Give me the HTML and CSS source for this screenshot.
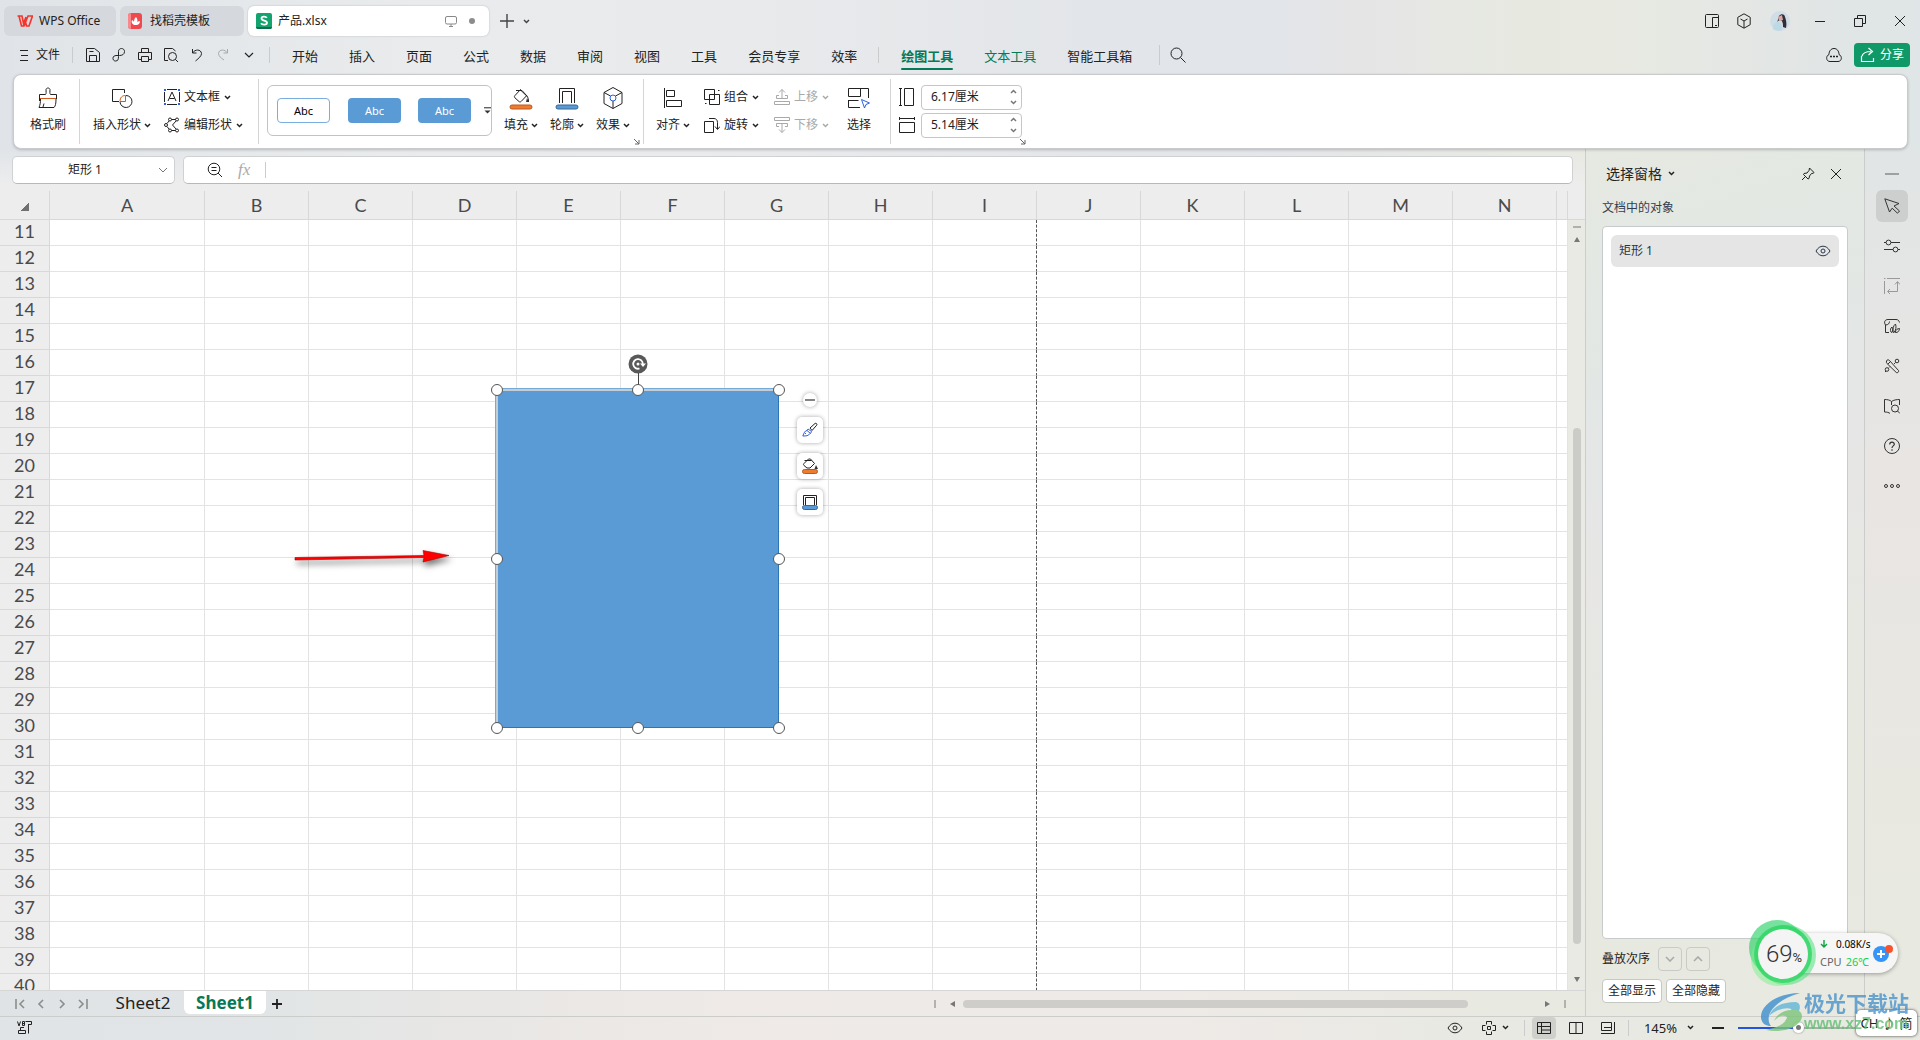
FILE: index.html
```html
<!DOCTYPE html>
<html lang="zh-CN">
<head>
<meta charset="utf-8">
<title>产品.xlsx - WPS Office</title>
<link rel="stylesheet" href="styles.css">
</head>
<body>
<svg class="defs" width="0" height="0" aria-hidden="true">
  <symbol id="chev" viewBox="0 0 7 5"><path d="M1 1l2.500 2.500L6 1" stroke-width="1.500"/></symbol>
  <symbol id="launch" viewBox="0 0 7 7"><path d="M1 1l5 5M6 2v4H2"/></symbol>
  <symbol id="eye" viewBox="0 0 16 16"><path d="M1 8c2-3.300 4.300-4.800 7-4.800S13 4.700 15 8c-2 3.300-4.300 4.800-7 4.800S3 11.300 1 8z"/><circle cx="8" cy="8" r="2"/></symbol>
  <symbol id="bucket" viewBox="0 0 24 24"><path d="M11.500 3.500L6 9.500c-.8.900-.8 1.600 0 2.400l4 3.600c.8.700 1.500.6 2.300-.2l5.200-5.500-6.500-6.300M7 4.500h6l5 5.500c1 1.500 1.500 3 1.500 6"/><path class="ink" d="M18 12l2 4h-3z"/><rect class="orange" x="1" y="19" width="22" height="4" rx="2"/></symbol>
  <symbol id="outline" viewBox="0 0 24 24"><path d="M4.500 17V2.500h15V17M7.500 17V5.500h9V17"/><rect class="blue" x="1" y="19" width="22" height="4" rx="2"/></symbol>
</svg>

<header class="titlebar">
  <nav class="tabs" aria-label="文档标签">
    <button class="tab tab-home">
      <svg class="i" width="16" height="16" viewBox="0 0 16 16"><path class="wps" d="M.5 3H5l1.500 7.500L9 4M2 3l2.500 10h2.500L11 3h4.500L12 13H9.500L8.500 9"/></svg>
      WPS Office
    </button>
    <button class="tab tab-docer">
      <svg width="16" height="16" viewBox="0 0 16 16"><rect width="14" height="16" rx="3" fill="#f0484f"/><path d="M0 3a3 3 0 013-3v16a3 3 0 01-3-3z" fill="#f9888c"/><path d="M6 12c-2-1-3-3-2-5 1 .5 1.500 1 2 2 0-2 .5-4 2-5 2 2 2 6 0 8z" fill="#fff"/><path d="M8 11c1-2 2-3 4-3 0 2-1 4-4 4z" fill="#fff"/></svg>
      找稻壳模板
    </button>
    <button class="tab tab-active">
      <svg width="16" height="16" viewBox="0 0 16 16"><rect width="16" height="16" rx="2" fill="#12a36f"/><path d="M0 14h16a2 2 0 01-2 2H2a2 2 0 01-2-2z" fill="#0a6e4b"/><path d="M10.800 4.800C10 3.300 5.500 3 5.500 5.500S11 7.200 11 9.700 6 12 5 10.300" fill="none" stroke="#fff" stroke-width="1.800"/></svg>
      产品.xlsx
      <svg class="i monitor" width="12" height="12" viewBox="0 0 12 12"><rect x=".5" y="1.500" width="11" height="7.500" rx="1.500"/><path d="M4 11.500h4M6 9v2"/></svg>
      <span class="dot"></span>
    </button>
  </nav>
  <button class="plain" aria-label="新建"><svg class="i" width="14" height="14" viewBox="0 0 14 14"><path d="M7 0v14M0 7h14" stroke-width="1.400"/></svg></button>
  <button class="plain" aria-label="标签列表"><svg class="i" width="7" height="5"><use href="#chev"/></svg></button>
  <div class="window-controls">
    <button aria-label="侧边视图"><svg class="i" width="16" height="16" viewBox="0 0 16 16"><rect x="1.500" y="1.500" width="13" height="13" rx="1"/><path d="M14 4.500H8.500v10M11 12.500h2"/></svg></button>
    <button aria-label="应用"><svg class="i" width="16" height="16" viewBox="0 0 16 16"><path d="M8 .8l6.200 3.500v7.400L8 15.200l-6.200-3.500V4.300zM4.500 6L8 8l3.500-2M8 8v7"/></svg></button>
    <button class="wide" aria-label="账号"><svg width="20" height="20" viewBox="0 0 20 20"><circle cx="10" cy="10" r="10" fill="#cfdde6"/><path d="M9 5c2-3 6-2 6 1 1 3 2 6 1 11l-3-1c0-3 0-5-2-7l-3 1-1 2z" fill="#332d37"/><path d="M8 6l4-2 1 5-4 1z" fill="#d8a8a4"/><path d="M3 18c0-5 2-7 5-7s4 3 4 8c-4 1-7 1-9-1z" fill="#bcd9e6"/></svg></button>
    <button class="wide" aria-label="最小化"><svg class="i" width="10" height="10" viewBox="0 0 10 10"><path d="M0 5.500h10"/></svg></button>
    <button class="wide" aria-label="还原"><svg class="i" width="12" height="12" viewBox="0 0 12 12"><path d="M.5 3.500h8v8h-8zM3.500 3V.5h8v8H9"/></svg></button>
    <button class="wide" aria-label="关闭"><svg class="i" width="10" height="10" viewBox="0 0 10 10"><path d="M0 0l10 10M10 0L0 10"/></svg></button>
  </div>
</header>

<nav class="menubar" aria-label="菜单">
  <button class="file"><svg class="i" width="8" height="12" viewBox="0 0 8 12"><path d="M0 1.500h8M1 6.500h7M0 11.500h8"/></svg>文件</button>
  <span class="sep"></span>
  <div class="quick">
    <button aria-label="保存"><svg class="i" width="16" height="16" viewBox="0 0 16 16"><path d="M1.500 14.500v-13h8l5 4v9zM4.500 14V8.500h7V14M4.500 4.500h4"/></svg></button>
    <button aria-label="输出"><svg class="i" width="16" height="16" viewBox="0 0 16 16"><path d="M7.500 9.500V4.500c0-4 6-4 6 0 0 3-2.500 4-5 4H5c-4 0-4 5.500-.5 5.500 2.500 0 3-1.500 3-4.500"/></svg></button>
    <button aria-label="打印"><svg class="i" width="16" height="16" viewBox="0 0 16 16"><path d="M4.500 5V1.500h7V5M4 12.500H1.500v-7h13v7H12M4.500 9.500h7v5h-7z"/></svg></button>
    <button aria-label="打印预览"><svg class="i" width="16" height="16" viewBox="0 0 16 16"><path d="M5 13.500H1.500v-12h8L12.500 4"/><circle cx="9.500" cy="9.500" r="4"/><path d="M12.500 12.500L15 15"/></svg></button>
    <button aria-label="撤销"><svg class="i" width="16" height="16" viewBox="0 0 16 16"><path d="M3.500 2v4h4M3.500 6C6 2 12 2 12.500 6.500 12.500 9 10 11 6.500 14"/></svg></button>
    <button aria-label="恢复" disabled><svg class="i" width="16" height="16" viewBox="0 0 16 16"><path d="M12.500 2v4h-4M12.500 6C10 2 4 2 3.500 6.500 3.500 9 6 11 9 13"/></svg></button>
    <button aria-label="更多"><svg class="i" width="10" height="6" viewBox="0 0 10 6"><path d="M1 1l4 4 4-4" stroke-width="1.200"/></svg></button>
  </div>
  <span class="sep"></span>
  <div class="menus">
    <button>开始</button><button>插入</button><button>页面</button><button>公式</button><button>数据</button><button>审阅</button><button>视图</button><button>工具</button><button>会员专享</button><button>效率</button>
  </div>
  <span class="sep mid"></span>
  <div class="menus">
    <button class="current">绘图工具</button><button class="green">文本工具</button><button>智能工具箱</button>
  </div>
  <span class="sep end"></span>
  <button class="search" aria-label="搜索"><svg class="i" width="16" height="16" viewBox="0 0 16 16"><circle cx="6.500" cy="6.500" r="5.500"/><path d="M10.500 10.500L15.500 15.500"/></svg></button>
  <div class="share-area">
    <button aria-label="云同步"><svg class="i" width="16" height="16" viewBox="0 0 16 16"><path d="M4 14.500C0 14.500-.5 9 3 7.500 3 4 5 1.500 8 1.500S13 4 13 7.500c3.500 1.500 3 7-1 7z"/><path d="M4 9.500h2M7 9.500h2M10 9.500h2" stroke-width="1.600"/></svg></button>
    <button class="share"><svg class="i" width="16" height="16" viewBox="0 0 16 16"><path d="M1.500 9v5.500h12V11M2 9c1-3 4-4.500 9-4.500M8.500 1l4 3.500-4 3.500" stroke-width="1.200"/></svg>分享</button>
  </div>
</nav>

<section class="ribbon" aria-label="绘图工具">
  <div class="group g-brush">
    <button class="big"><svg class="i" width="24" height="24" viewBox="0 0 24 24"><path d="M3.500 15V8.500h6c1-1 .5-3 .5-5 .5-2 3.500-2 4 0 0 2-.5 4 .5 5h6V13M4.500 13c0 4-.5 6-1.500 8.500h15c1.500-1.500 2-4 2-8.500M7 21l1-3.500"/><path class="s-orange" d="M4 12.500h16"/></svg><span>格式刷</span></button>
  </div>
  <div class="group g-insert">
    <button class="big"><svg class="i" width="24" height="24" viewBox="0 0 24 24"><path d="M9 15.500H2.500v-12h12V7"/><path d="M16 9.500a6 6 0 11-6 6.500"/><path class="s-orange" d="M10 15.500c0-4 2-6 5.500-6v6z"/></svg><span>插入形状<svg class="i" width="7" height="5"><use href="#chev"/></svg></span></button>
    <div class="rows">
      <button class="row"><svg class="i" width="16" height="16" viewBox="0 0 16 16"><path d="M.5 3v10M15.500 3v10M3 .5h10M3 15.500h10M4 12l4-9 4 9M5.500 9.500h5"/><path class="s-blue" d="M0 1h2M14 1h2M0 15h2M14 15h2" stroke-width="2"/></svg>文本框<svg class="i chev" width="7" height="5"><use href="#chev"/></svg></button>
      <button class="row"><svg class="i" width="16" height="16" viewBox="0 0 16 16"><circle cx="6" cy="2.500" r="1.500"/><circle cx="13" cy="2.500" r="1.500"/><circle cx="2" cy="8" r="1.500"/><circle cx="6" cy="13.500" r="1.500"/><circle cx="13" cy="13.500" r="1.500"/><path d="M7.500 2.500h4M5 4L3 6.500M3 9.500L5 12M7.500 13.500h4M12 4L8.500 8l3.500 4"/></svg>编辑形状<svg class="i chev" width="7" height="5"><use href="#chev"/></svg></button>
    </div>
  </div>
  <div class="group g-style">
    <div class="gallery">
      <button class="abc abc-line">Abc</button>
      <button class="abc">Abc</button>
      <button class="abc">Abc</button>
      <button class="more" aria-label="更多样式"><svg class="i" width="7" height="8" viewBox="0 0 7 8"><path d="M0 .8h7"/><path class="ink" d="M0.500 3.500h6L3.500 6.500z"/></svg></button>
    </div>
    <button class="big"><svg class="i" width="24" height="24"><use href="#bucket"/></svg><span>填充<svg class="i" width="7" height="5"><use href="#chev"/></svg></span></button>
    <button class="big"><svg class="i" width="24" height="24"><use href="#outline"/></svg><span>轮廓<svg class="i" width="7" height="5"><use href="#chev"/></svg></span></button>
    <button class="big"><svg class="i" width="24" height="24" viewBox="0 0 24 24"><path d="M12 1.500l9 5v11l-9 5-9-5v-11zM3 6.500l6.500 3.500M21 6.500L14.500 10M12 15v7.500"/><circle class="s-blue" cx="12" cy="12" r="3"/></svg><span>效果<svg class="i" width="7" height="5"><use href="#chev"/></svg></span></button>
    <button class="launcher" aria-label="形状格式"><svg class="i" width="7" height="7"><use href="#launch"/></svg></button>
  </div>
  <div class="group g-arrange">
    <button class="big"><svg class="i" width="24" height="24" viewBox="0 0 24 24"><path d="M3.500 2v20M5.500 4.500h8v6h-8zM5.500 14.500h15v6h-15z"/></svg><span>对齐<svg class="i" width="7" height="5"><use href="#chev"/></svg></span></button>
    <div class="rows">
      <button class="row"><svg class="i" width="16" height="16" viewBox="0 0 16 16"><path d="M.5 .5h10v10H.500zM5.500 5.500h10v10h-10zM14 1.500h1.500M1 14.500h1.500"/></svg>组合<svg class="i chev" width="7" height="5"><use href="#chev"/></svg></button>
      <button class="row"><svg class="i" width="16" height="16" viewBox="0 0 16 16"><path d="M.5 4.500h9v11h-9zM5 1.500h5c2 0 3.500 1.500 3.500 4V12M11 9.500l2.500 3L16 9.500"/></svg>旋转<svg class="i chev" width="7" height="5"><use href="#chev"/></svg></button>
    </div>
    <div class="rows order-rows">
      <button class="row" disabled><svg class="i" width="16" height="16" viewBox="0 0 16 16"><path d="M8 9V.5M5 3.500l3-3 3 3M5 6.500H2.500v3h11v-3H11M.5 12.500h15v3H.500z"/></svg>上移<svg class="i chev" width="7" height="5"><use href="#chev"/></svg></button>
      <button class="row" disabled><svg class="i" width="16" height="16" viewBox="0 0 16 16"><path d="M8 7v8.500M5 12.500l3 3 3-3M5 9.500H2.500v-3h11v3H11M.5 .5h15v3H.500z"/></svg>下移<svg class="i chev" width="7" height="5"><use href="#chev"/></svg></button>
    </div>
    <button class="big pick"><svg class="i" width="24" height="24" viewBox="0 0 24 24"><path d="M13.500 10.500h-12v-8h12M1.500 14v7.500H13M1.500 14.500h10M12.500 2.500h9V12M13.500 10.500v-8"/><path class="s-blue" d="M14.500 13.500l8 3.500-3.500 1.500-1.500 3.500z"/></svg><span>选择</span></button>
  </div>
  <div class="group g-size">
    <div class="rows">
      <div class="size"><label for="h"><svg class="i" width="16" height="20" viewBox="0 0 16 20"><path d="M1.500 2v16M0 1.500h3M0 18.500h3M5.500 1.500h9v17h-9z"/></svg></label><span class="spin"><input id="h" value="6.17厘米" aria-label="高度"><span class="arrows"><button aria-label="增加高度"><svg class="i flip" width="7" height="5"><use href="#chev"/></svg></button><button aria-label="减少高度"><svg class="i" width="7" height="5"><use href="#chev"/></svg></button></span></span></div>
      <div class="size"><label for="w"><svg class="i" width="16" height="16" viewBox="0 0 16 16"><path d="M1 1.500h14M.5 0v3M15.500 0v3M.5 5.500h15v10H.500z"/></svg></label><span class="spin"><input id="w" value="5.14厘米" aria-label="宽度"><span class="arrows"><button aria-label="增加宽度"><svg class="i flip" width="7" height="5"><use href="#chev"/></svg></button><button aria-label="减少宽度"><svg class="i" width="7" height="5"><use href="#chev"/></svg></button></span></span></div>
    </div>
    <button class="launcher" aria-label="大小和属性"><svg class="i" width="7" height="7"><use href="#launch"/></svg></button>
  </div>
</section>

<main class="work">
  <section class="editor">
    <div class="formula-row">
      <div class="namebox"><input value="矩形 1" aria-label="名称框"><button aria-label="名称列表"><svg class="i" width="10" height="6" viewBox="0 0 10 6"><path d="M1 1l4 4 4-4"/></svg></button></div>
      <div class="formula"><svg class="i" width="16" height="16" viewBox="0 0 16 16"><circle cx="7" cy="7" r="5.800"/><path d="M11 11l4 4M4.500 5.500h5M4.500 8.500h5"/></svg><span class="fx">fx</span><input aria-label="编辑栏"></div>
    </div>
    <div class="sheet">
      <div class="canvas">
        <table class="grid"><colgroup id="cols"></colgroup><thead><tr id="heads"></tr></thead><tbody id="rows"></tbody></table>
        <div class="shape">
          <span class="stem"></span>
          <svg class="rotate" width="20" height="20" viewBox="0 0 20 20"><circle cx="10" cy="10" r="9.500" fill="#595959"/><path d="M11.500 14.500A4.800 4.800 0 1114.800 10" fill="none" stroke="#fff" stroke-width="1.800"/><path d="M12 9.500h6l-3 3.500z" fill="#fff"/><circle cx="10" cy="10" r="1.500" fill="#fff"/></svg>
          <i class="h n w"></i><i class="h n c"></i><i class="h n e"></i><i class="h m w"></i><i class="h m e"></i><i class="h s w"></i><i class="h s c"></i><i class="h s e"></i>
        </div>
        <div class="float-tools">
          <button class="collapse" aria-label="收起"><svg class="i" width="10" height="2" viewBox="0 0 10 2"><path d="M0 1h10" stroke-width="1.600"/></svg></button>
          <button aria-label="形状样式"><svg class="i" width="16" height="16" viewBox="0 0 16 16"><path d="M8 6l5-4.500c1-.8 2.500.5 1.700 1.700L10 8.500z"/><path class="s-blue" d="M6 7l3.500 2.500-1 2L5 8.500zM5 8.500C3 8.500 2 11 .8 14c3 0 6 0 7-2.500M3 12l1-1"/></svg></button>
          <button aria-label="填充"><svg class="i" width="16" height="16" viewBox="0 0 16 16"><path d="M6.500 1L2 5.500c-.7.700-.7 1.400 0 2l3 2.500h3l4.500-4.500L8.500 1zM2.500 2.500h7"/><path class="ink" d="M14 7l2 4h-3.500z"/><rect class="orange" x=".5" y="11.500" width="15" height="4" rx="2"/></svg></button>
          <button aria-label="轮廓"><svg class="i" width="16" height="16" viewBox="0 0 16 16"><path d="M1.500 11V1.500h13V11M3.500 11V3.500h9V11"/><rect class="blue" x=".5" y="11.500" width="15" height="4" rx="2"/></svg></button>
        </div>
        <svg class="arrow" width="160" height="30" viewBox="0 0 160 30"><path d="M1 13.500l129-2-1-5 26 5-26 6.500 1-4.500L1 16z" fill="#fe0000" stroke="#a00" stroke-width=".6"/></svg>
      </div>
      <div class="vscroll"><span class="corner"></span><span class="grip"></span><svg width="6" height="5"><path d="M3 0l3 5H0z" fill="#777"/></svg><div class="vtrack"><span class="vthumb"></span></div><svg width="6" height="5"><path d="M0 0h6L3 5z" fill="#777"/></svg></div>
    </div>
    <div class="sheetbar">
      <div class="nav">
        <button aria-label="第一个"><svg class="i" width="10" height="10" viewBox="0 0 10 10"><path d="M1 0v10M9 1L5 5l4 4" stroke-width="1.600"/></svg></button>
        <button aria-label="上一个"><svg class="i" width="10" height="10" viewBox="0 0 10 10"><path d="M7 1L3 5l4 4" stroke-width="1.600"/></svg></button>
        <button aria-label="下一个"><svg class="i" width="10" height="10" viewBox="0 0 10 10"><path d="M3 1l4 4-4 4" stroke-width="1.600"/></svg></button>
        <button aria-label="最后一个"><svg class="i" width="10" height="10" viewBox="0 0 10 10"><path d="M9 0v10M1 1l4 4-4 4" stroke-width="1.600"/></svg></button>
      </div>
      <button class="sheet-tab">Sheet2</button><button class="sheet-tab on">Sheet1</button>
      <button class="add" aria-label="新建工作表"><svg class="i" width="10" height="10" viewBox="0 0 10 10"><path d="M5 0v10M0 5h10" stroke-width="1.800"/></svg></button>
      <div class="hscroll"><span class="vgrip"></span><svg width="5" height="6"><path d="M5 0v6L0 3z" fill="#777"/></svg><div class="htrack"><span class="hthumb"></span></div><svg width="5" height="6"><path d="M0 0v6l5-3z" fill="#777"/></svg><span class="vgrip"></span></div>
    </div>
  </section>

  <aside class="pane" aria-label="选择窗格">
    <div class="pane-head"><h2>选择窗格</h2><svg class="i" width="7" height="5"><use href="#chev"/></svg>
      <button class="pin" aria-label="固定"><svg class="i" width="14" height="14" viewBox="0 0 14 14"><path d="M8.500 1l4.500 4.500-1 .8-1.500.2-2 2.500-.5 2.500-1 .5L2.500 7.500l.5-1L6 6l2-2.500zM4.500 9.500L1 13"/></svg></button>
      <button aria-label="关闭窗格"><svg class="i" width="10" height="10" viewBox="0 0 10 10"><path d="M0 0l10 10M10 0L0 10"/></svg></button></div>
    <p class="caption">文档中的对象</p>
    <ul class="objects"><li>矩形 1<button aria-label="显示或隐藏"><svg class="i" width="16" height="16"><use href="#eye"/></svg></button></li></ul>
    <div class="order"><span>叠放次序</span><button aria-label="下移"><svg class="i" width="10" height="6" viewBox="0 0 10 6"><path d="M1 1l4 4 4-4" stroke-width="1.600"/></svg></button><button aria-label="上移"><svg class="i flip" width="10" height="6" viewBox="0 0 10 6"><path d="M1 1l4 4 4-4" stroke-width="1.600"/></svg></button></div>
    <div class="all"><button>全部显示</button><button>全部隐藏</button></div>
  </aside>

  <nav class="rail" aria-label="任务窗格">
    <button class="fold" aria-label="收起"><svg class="i" width="14" height="2" viewBox="0 0 14 2"><path d="M0 1h14" stroke-width="1.500"/></svg></button>
    <button class="on" aria-label="选择"><svg class="i" width="16" height="16" viewBox="0 0 16 16"><path d="M.8 .8L15 5.500 10 8l5.500 5-2 2.200-5.300-5L5.500 14z"/></svg></button>
    <button aria-label="属性"><svg class="i" width="16" height="16" viewBox="0 0 16 16"><path d="M0 4.500h2M7 4.500h9M0 11.500h9M14 11.500h2"/><circle cx="4.500" cy="4.500" r="2.400"/><circle cx="11.500" cy="11.500" r="2.400"/></svg></button>
    <button disabled aria-label="转置"><svg class="i" width="16" height="16" viewBox="0 0 16 16"><path d="M.5 3v13M3 .5h13M0 .5h1.500M4 13.500h9.500V4M11 6.500l2.500-3L16 6.500M6 11l-2.500 2.500L6 16"/></svg></button>
    <button aria-label="素材"><svg class="i" width="16" height="16" viewBox="0 0 16 16"><path d="M5 14.500H1.500V7C-.5 4 1 1.500 4 1.500h8c2 0 3 1 3.500 3M1.500 7c3 0 4-2 4-3.500"/><path d="M7 14c-1-2-.5-4 1-5 1 2 1 4 0 5.500zM9 14c0-4 0-6 2.500-8 1 3 .5 6-1.500 8.500zM11 14.500c1-3 2.500-4 4.500-4-.5 3-1.500 4-4 4z"/></svg></button>
    <button aria-label="工具"><svg class="i" width="16" height="16" viewBox="0 0 16 16"><path d="M2.500 3c.5-1.500 2-1.500 3-.5l9 10c.8 1-1 3-2.200 2L3 5.500c-.6-.8-.8-1.500-.5-2.500zM4 6l2.500-2.500"/><circle cx="13" cy="3" r="1.800"/><circle cx="3" cy="11.500" r="1.800"/><path d="M10 6l1.500-1.500M5 9.500L6 8.500M1 14l1-1"/></svg></button>
    <button aria-label="查阅"><svg class="i" width="16" height="16" viewBox="0 0 16 16"><path d="M6 15.500c-1-1-3-1.500-5.500-1.500V1.500c3 0 5.500.5 7 2 2-1.500 5-2 8-2V7M7.500 3.500V7"/><circle cx="11" cy="10.500" r="3.500"/><path d="M13.500 13L16 15.500"/></svg></button>
    <button aria-label="帮助"><svg class="i" width="16" height="16" viewBox="0 0 16 16"><circle cx="8" cy="8" r="7.500"/><path d="M5.700 6.500c0-3 4.600-3 4.600-.3C10.300 8 8 7.800 8 10M8 11.300v1.400" stroke-width="1.200"/></svg></button>
    <button aria-label="更多"><svg class="i" width="16" height="16" viewBox="0 0 16 16"><circle cx="2" cy="8" r="1.500"/><circle cx="8" cy="8" r="1.500"/><circle cx="14" cy="8" r="1.500"/></svg></button>
  </nav>
</main>

<footer class="status">
  <button class="macro" aria-label="宏"><svg class="i" width="15" height="14" viewBox="0 0 15 14"><path d="M.5 .5L2 5 3.500 .5M5.500 .5v4h2v-4zM5.500 2.500h2M8.500 .500h6v3h-3M11.500 3v9.500M3.500 9V6.500H7M1.500 9.500h7v3h-7z"/></svg></button>
  <button class="eye" aria-label="护眼模式"><svg class="i" width="16" height="16"><use href="#eye"/></svg></button>
  <button class="reading" aria-label="阅读布局"><svg class="i" width="14" height="14" viewBox="0 0 14 14"><path d="M5.500 5.500h3v3h-3zM4.500 3.500v-3h5v3M4.500 10.500v3h5v-3M3.500 4.500h-3v5h3M10.500 4.500h3v5h-3"/></svg><svg class="i" width="7" height="5"><use href="#chev"/></svg></button>
  <span class="sep"></span>
  <button class="view on" aria-label="普通视图"><svg class="i" width="14" height="14" viewBox="0 0 14 14"><path d="M.5 1.500h13v11H.500zM.5 5.500h13M4.500 1.500v11M4.500 9h9"/></svg></button>
  <button class="view" aria-label="分页预览"><svg class="i" width="14" height="14" viewBox="0 0 14 14"><path d="M.5 1.500h13v11H.500zM7 1.500v11"/></svg></button>
  <button class="view" aria-label="页面布局"><svg class="i" width="14" height="14" viewBox="0 0 14 14"><path d="M.5 1.500h10v8H.500zM3 6.500h7M13.500 1v11.500H0"/></svg></button>
  <span class="sep"></span>
  <button class="percent">145%<svg class="i" width="7" height="5"><use href="#chev"/></svg></button>
  <button class="minus" aria-label="缩小"><svg class="i" width="12" height="2" viewBox="0 0 12 2"><path d="M0 1h12" stroke-width="2"/></svg></button>
  <input class="zoom" type="range" value="50" aria-label="缩放">
</footer>

<div class="monitor-ball">
  <div class="pill">
    <div><p><svg width="8" height="8" viewBox="0 0 8 8"><path d="M4 0v7M1 4l3 3 3-3" fill="none" stroke="#0aa53c" stroke-width="1.400"/></svg><span>0.08K/s</span></p><p class="cpu">CPU <b>26℃</b></p></div>
    <svg width="22" height="20" viewBox="0 0 22 20"><circle cx="9" cy="11" r="8" fill="#3494f7"/><path d="M9 7v8M5 11h8" stroke="#fff" stroke-width="2"/><circle cx="17" cy="6" r="4" fill="#f8532f"/></svg>
  </div>
  <svg class="ring" width="70" height="72" viewBox="0 0 70 72"><circle cx="31" cy="31" r="28" fill="#2ed16a" opacity=".65"/><circle cx="40" cy="38" r="30" fill="#4fe07a" opacity=".55"/><circle cx="32" cy="42" r="27" fill="#7bf08b" opacity=".5"/><circle cx="37" cy="37" r="29" fill="#30d465" opacity=".8"/><circle cx="37" cy="37" r="25" fill="#f4f4f4"/></svg>
  <p class="load">69<small>%</small></p>
</div>
<div class="ime">CH <span>♪</span> 简</div>
<div class="watermark">
  <svg width="44" height="42" viewBox="0 0 44 42"><path d="M40 2C18 2 0 14 1 27c1 6 5 8 10 8C4 26 12 10 40 2z" fill="#3d8fcf"/><path d="M9 25c4-10 14-14 27-14 5 1 5 7 1 12-3 4-7 6-12 7 6-5 8-10 6-12-4-2-14 0-22 7z" fill="#62b5d8"/><path d="M6 39c10-2 20-6 21-13-4-3-10 0-13 4 3-7 10-11 18-11 8-1 12 4 9 10C36 38 20 42 6 39z" fill="#7cc47a"/></svg>
  <p><strong>极光下载站</strong><em>www.xz7.com</em></p>
</div>
<script src="grid.js"></script>
</body>
</html>
```
FILE: styles.css
```css
* { box-sizing: border-box; }
html { height: 100%; overflow: hidden; }
body {
  margin: 0;
  height: 100%;
  display: flex;
  flex-direction: column;
  overflow: hidden;
  position: relative;
  font: 12px/20px "Noto Sans", "Noto Sans CJK SC", sans-serif;
  color: #222;
  background: linear-gradient(90deg, #e0e4e8 0, #e9ebec 22%, #e9eaec 38%, #e2e5e9 58%, #e2e5ea 66%, #e6e5e6 71%, #e7e9e1 79%, #e7e9e2 85%, #e1e5e5 95%, #e0e5e7);
}
button, input { font: inherit; color: inherit; background: none; border: 0; padding: 0; margin: 0; }
button { display: inline-flex; align-items: center; justify-content: center; white-space: nowrap; }
button:disabled { color: #a9a9a9; }
p, h2, ul { margin: 0; padding: 0; font-weight: 400; }
svg { display: block; flex: none; }
.defs { position: absolute; }
.i { fill: none; stroke: currentColor; stroke-width: 1; }
.flip { transform: scaleY(-1); }
.ink { fill: #333; stroke: none; }
.orange { fill: #ee7c30; stroke: #b85a1c; }
.blue { fill: #5b9bd5; stroke: #35699b; }
.s-orange { stroke: #d35a1b; }
.s-blue { stroke: #2f5fe0; }
.wps { stroke: #f4352b; stroke-width: 1.6; }
.sep { width: 1px; height: 16px; background: #c9cbcd; flex: none; }

.titlebar { display: flex; align-items: center; height: 38px; padding: 4px 0 0 4px; flex: none; }
.tabs { display: flex; gap: 4px; }
.tab { height: 30px; border-radius: 6px; background: #d5d8dc; justify-content: flex-start; gap: 6px; padding: 0 8px; }
.tab-home { width: 112px; padding-left: 13px; }
.tab-docer { width: 124px; padding-left: 8px; }
.tab-active { width: 241px; background: #fff; box-shadow: 0 0 2px #b4b8bc; }
.monitor { margin-left: auto; color: #888; }
.dot { width: 6px; height: 6px; border-radius: 3px; background: #8c8c8c; margin: 0 6px; }
.plain { margin-left: 11px; color: #444; }
.plain + .plain { margin-left: 9px; }
.window-controls { display: flex; margin-left: auto; }
.window-controls button { width: 32px; height: 28px; }
.window-controls .wide { width: 40px; }

.menubar { display: flex; align-items: center; height: 36px; flex: none; padding: 0 10px 2px 20px; }
.file { gap: 8px; width: 40px; margin-right: 12px; }
.quick { display: flex; margin: 0 7px; }
.quick button { width: 26px; height: 24px; }
.menus { display: flex; gap: 31px; font-size: 13px; padding-top: 1px; }
.menubar .sep + .menus { margin-left: 22px; }
.sep.mid { margin-left: 21px; }
.sep.end { margin-left: 27px; height: 20px; }
.menus .current { color: #067a55; font-weight: 700; position: relative; }
.current::after { content: ""; position: absolute; left: 0; right: 0; bottom: -4px; height: 2px; border-radius: 1px; background: #067a55; }
.menus .green { color: #067a55; }
.search { margin-left: 10px; }
.share-area { margin-left: auto; display: flex; align-items: center; gap: 12px; }
.share { width: 56px; height: 24px; border-radius: 4px; gap: 4px; background: #109968; color: #fff; }

.ribbon { display: flex; height: 75px; flex: none; margin: 0 12px 0 13px; background: #fff; border: 1px solid #c8cacc; border-radius: 8px; box-shadow: 0 1px 3px rgba(0, 0, 0, .2); position: relative; z-index: 1; }
.group { display: flex; align-items: flex-start; position: relative; padding-top: 8px; }
.group:not(:last-child)::after { content: ""; position: absolute; right: 0; top: 4px; bottom: 4px; width: 1px; background: #d5d5d5; }
.g-brush { width: 66px; padding-left: 16px; }
.g-insert { width: 179px; padding-left: 13px; gap: 13px; }
.g-style { width: 385px; padding-left: 8px; gap: 12px; }
.g-arrange { width: 247px; padding-left: 12px; gap: 14px; }
.g-size { width: 139px; padding-left: 8px; }
.big { flex-direction: column; gap: 5px; padding-top: 3px; }
.big span { display: flex; align-items: center; gap: 3px; }
.pick { margin-left: 4px; }
.rows { display: flex; flex-direction: column; align-items: flex-start; }
.row { height: 28px; gap: 4px; }
.order-rows { margin-left: 1px; }
.gallery { display: flex; align-items: center; width: 225px; height: 51px; margin-top: 2px; padding-left: 9px; border: 1px solid #c2c2c2; border-radius: 6px; }
.abc { width: 53px; height: 25px; margin-right: 17px; border-radius: 4px; background: #5b9bd5; color: #fff; font-size: 11px; }
.abc-line { margin-right: 18px; background: #fff; border: 1px solid #78aee0; color: #000; }
.abc:nth-child(3) { margin-right: 13px; }
.launcher { position: absolute; right: 4px; bottom: 3px; color: #666; }
.size { display: flex; align-items: center; height: 28px; gap: 6px; }
.spin { display: flex; width: 101px; height: 25px; border: 1px solid #c6c6c6; border-radius: 4px; }
.spin input { width: 83px; padding-left: 9px; }
.arrows { display: flex; flex-direction: column; justify-content: space-around; width: 16px; align-items: center; color: #777; }

.work { display: flex; flex: 1; min-height: 0; }
.editor { flex: 1; min-width: 0; display: flex; flex-direction: column; }
.formula-row { display: flex; gap: 8px; height: 42px; padding: 7px 12px; background: linear-gradient(rgba(237, 237, 237, 0), #ededed 85%); }
.namebox, .formula { display: flex; align-items: center; background: #fff; border: 1px solid #cfd2d2; border-bottom-color: #b5b9b9; border-radius: 5px; }
.namebox { width: 163px; }
.namebox input { width: 144px; text-align: center; }
.namebox button { color: #777; width: 12px; }
.formula { flex: 1; padding-left: 23px; }
.fx { font: italic 17px/20px "Liberation Serif", serif; color: #aaa; margin: 0 15px; }
.formula input { flex: 1; height: 16px; border-left: 1px solid #ccc; }

.sheet { flex: 1; min-height: 0; display: flex; }
.canvas { flex: 1; min-width: 0; position: relative; overflow: hidden; background: #fff; }
.grid { width: 100%; table-layout: fixed; border-collapse: separate; border-spacing: 0; }
.grid th, .grid td { padding: 0; height: 26px; border-right: 1px solid #e3e3e3; border-bottom: 1px solid #e3e3e3; }
.grid th { background: #ededed; font: 18px/23px Lato, sans-serif; color: #4a4a4a; border-color: #d8d8d8; }
.grid thead th { height: 29px; line-height: 28px; }
.grid tbody th { padding-bottom: 2px; }
.grid .page-end { border-right: 1px dashed #555; }
.select-all span { display: block; width: 8px; height: 8px; margin: 3px 0 0 21px; background: linear-gradient(135deg, transparent 45%, #707070 46%); }
.shape { position: absolute; left: 496px; top: 198px; width: 283px; height: 339px; background: #5b9bd5; border: 1px solid #2e75b6; border-left: 2px solid #c5cdd4; border-top: 2px solid #c5cdd4; box-shadow: -1px -1px 0 #77a9d6; }
.h { position: absolute; width: 12px; height: 12px; border-radius: 6px; background: #fff; border: 1px solid #555; }
.h.n { top: -7px; } .h.m { top: 162px; } .h.s { bottom: -7px; }
.h.w { left: -7px; } .h.c { left: 134px; } .h.e { right: -7px; }
.stem { position: absolute; left: 140px; top: -18px; width: 1px; height: 12px; background: #444; }
.rotate { position: absolute; left: 130px; top: -37px; }
.float-tools { position: absolute; left: 797px; top: 202px; display: flex; flex-direction: column; align-items: center; gap: 10px; }
.float-tools button { width: 26px; height: 26px; background: #fff; border-radius: 5px; box-shadow: 0 0 4px rgba(0, 0, 0, .35); }
.float-tools .collapse { width: 14px; height: 14px; border-radius: 7px; color: #666; }
.arrow { position: absolute; left: 294px; top: 353px; filter: drop-shadow(2px 4px 3px rgba(0, 0, 0, .55)); }
.vscroll { width: 17px; display: flex; flex-direction: column; align-items: center; padding-bottom: 8px; background: #e8eae3; }
.corner { width: 100%; height: 29px; background: #ededed; border-bottom: 1px solid #d8d8d8; }
.grip { width: 8px; height: 2px; background: #b0b0ac; margin: 6px 0 9px; }
.vtrack { flex: 1; display: flex; flex-direction: column; margin: 4px 0; }
.vtrack::before { content: ""; flex: 25; }
.vtrack::after { content: ""; flex: 4; }
.vthumb { width: 8px; flex: 71; border-radius: 4px; background: #cbcbc8; }

.sheetbar { display: flex; align-items: center; height: 26px; padding-right: 19px; border-top: 1px solid #d5d7d7; background: linear-gradient(90deg, #dfe3e6 0, #e2e5e6 18%, #e9e7e5 32%, #efeae7 48%, #eeeae7 74%, #e8e9e1 96%); }
.nav { display: flex; width: 96px; padding-left: 15px; gap: 11px; color: #8c8c8c; }
.sheet-tab { height: 23px; width: 82px; font-size: 17px; align-self: flex-start; }
.sheet-tab:first-of-type { width: 88px; padding-left: 6px; }
.sheet-tab.on { background: #fff; color: #067a55; font-weight: 700; border-radius: 0 0 6px 6px; }
.add { margin-left: 6px; }
.hscroll { margin-left: auto; width: calc(40% + 6px); display: flex; align-items: center; }
.vgrip { width: 2px; height: 8px; background: #b3b3ae; margin-right: 14px; }
.vgrip:last-child { margin: 0 0 0 14px; }
.htrack { flex: 1; margin: 0 8px; }
.hthumb { display: block; width: 88%; height: 8px; border-radius: 4px; background: #cfcdc9; }

.pane { width: 279px; display: flex; flex-direction: column; padding: 14px 16px 13px; border-left: 1px solid #cacdcc; background: linear-gradient(160deg, #e6e9e1 0, #e2e7e5 25%, #e7e6e5 45%, #e6e8e1 60%, #e8e9e0); }
.pane-head { display: flex; align-items: center; height: 21px; padding: 0 7px 0 4px; gap: 6px; }
.pane-head h2 { font-size: 14px; }
.pane-head .pin { margin: 0 10px 0 auto; }
.caption { margin: 14px 0 8px; color: #333d50; }
.objects { flex: 1; list-style: none; background: #fff; border: 1px solid #c8cbcd; border-radius: 4px; padding: 8px; }
.objects li { display: flex; align-items: center; justify-content: space-between; height: 32px; border-radius: 6px; background: #e5e5e5; padding: 0 8px; color: #28354a; }
.order { display: flex; align-items: center; gap: 4px; margin: 8px 0; }
.order span { margin-right: 4px; }
.order button { width: 24px; height: 24px; border: 1px solid #cacbc7; border-radius: 4px; color: #aaa; }
.all { display: flex; gap: 4px; }
.all button { width: 60px; height: 24px; border: 1px solid #c6c8c4; border-radius: 4px; background: #fff; }
.rail { width: 56px; border-left: 1px solid #cacdcc; display: flex; flex-direction: column; align-items: center; gap: 8px; padding: 9px 1px 0 0; background: linear-gradient(#e1e5e5, #e7e5e4 30%, #e9e5e3 40%, #e8e9e0 85%); color: #333; }
.rail button { width: 32px; height: 32px; border-radius: 6px; }
.rail .fold { color: #888; margin-bottom: -8px; }
.rail .on { background: #cdcfcf; }
.rail button:disabled { color: #999; }

.status { display: flex; align-items: center; height: 24px; flex: none; padding: 0 62px 2px 17px; border-top: 1px solid #cbcdcb; background: linear-gradient(90deg, #e0e4e6 0, #e2e5e6 15%, #e9e7e5 26%, #efeae7 40%, #eeeae7 62%, #e8e9e3 78%, #e8e9e0); }
.status .eye { margin-left: auto; }
.reading { margin: 0 15px 0 19px; gap: 6px; }
.view { width: 24px; height: 22px; margin-right: 8px; border-radius: 4px; }
.status .sep + .view { margin-left: 7px; }
.view.on { background: #cfd0cb; }
.percent { font-size: 13px; gap: 10px; margin: 0 18px 0 15px; }
.minus { margin-right: 14px; }
.zoom { appearance: none; width: 120px; height: 2px; background: linear-gradient(90deg, #2454e0 50%, #aab0a8 50%); }
.zoom::-webkit-slider-thumb { appearance: none; width: 11px; height: 11px; border-radius: 6px; border: 3px solid #fff; background: #777; box-shadow: 0 0 2px #777; }

.monitor-ball { position: absolute; right: 22px; bottom: 51px; width: 152px; height: 72px; display: flex; align-items: center; justify-content: flex-end; z-index: 2; }
.pill { width: 112px; height: 40px; border-radius: 0 20px 20px 0; background: #f6f6f6; box-shadow: 0 1px 4px rgba(0, 0, 0, .35); display: flex; align-items: center; justify-content: space-between; padding: 0 4px 0 34px; font-size: 10px; line-height: 18px; color: #000; flex: none; }
.pill > svg { margin-left: -16px; }
.pill p { display: flex; align-items: center; gap: 8px; white-space: nowrap; }
.pill .cpu { gap: 4px; color: #666; font-size: 11px; }
.cpu b { color: #0bd457; font-weight: 400; }
.ring { position: absolute; left: 0; top: 0; }
.load { position: absolute; left: 11px; top: 22px; width: 54px; text-align: center; font: 300 24px/30px Roboto, sans-serif; color: #333; }
.load small { font-size: 13px; font-weight: 400; }
.ime { position: absolute; right: 3px; bottom: 4px; width: 61px; height: 26px; display: flex; align-items: center; justify-content: center; gap: 4px; background: #fff; border-radius: 5px; box-shadow: 0 0 3px #333; font-size: 13px; }
.watermark { position: absolute; right: 11px; bottom: 7px; display: flex; align-items: flex-start; opacity: .8; pointer-events: none; }
.watermark p { display: flex; flex-direction: column; }
.watermark strong { font-size: 21px; line-height: 24px; color: #4a94cc; }
.watermark em { font: 700 16px/18px "Liberation Sans", sans-serif; color: #64be78; }
```
FILE: grid.js
```js
const letters = "ABCDEFGHIJKLMN".split("");
const firstRow = 11;
const lastRow = 40;

const widths = [50, 155].concat(Array(letters.length - 1).fill(104));
document.getElementById("cols").innerHTML =
  widths.map(w => `<col style="width:${w}px">`).join("") + "<col>";

document.getElementById("heads").innerHTML =
  '<th class="select-all"><span></span></th>' +
  letters.map(l => `<th scope="col">${l}</th>`).join("") + "<th></th>";

let html = "";
for (let r = firstRow; r <= lastRow; r++) {
  const cells = letters.map(l => (l === "I" ? '<td class="page-end"></td>' : "<td></td>")).join("");
  html += `<tr><th scope="row">${r}</th>${cells}<td></td></tr>`;
}
document.getElementById("rows").innerHTML = html;
```
